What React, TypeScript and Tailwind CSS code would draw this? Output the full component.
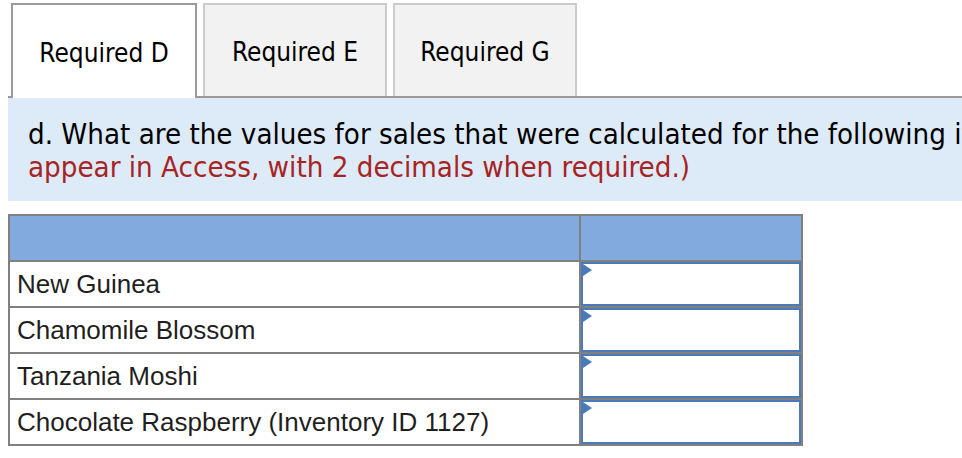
const tabs = [
  { label: 'Required D', width: 'w-[186px]', active: true },
  { label: 'Required E', width: 'w-[184px]', active: false },
  { label: 'Required G', width: 'w-[184px]', active: false },
];

const items = [
  'New Guinea',
  'Chamomile Blossom',
  'Tanzania Moshi',
  'Chocolate Raspberry (Inventory ID 1127)',
];

const tahoma = { fontFamily: '"DejaVu Sans Condensed", "DejaVu Sans", sans-serif', fontStretch: 'condensed' };

function AnswerInput() {
  return (
    <div className="relative h-full w-full border-2 border-[#4a7aba] bg-white">
      {/* little marker in the corner of each answer box */}
      <span className="absolute left-0 top-0 h-0 w-0 border-y-[6px] border-l-[9px] border-y-transparent border-l-[#4a7aba]" />
    </div>
  );
}

export default function App() {
  return (
    <div className="h-screen w-screen overflow-hidden bg-white">
      <div className="w-[1200px] pl-2 pt-[3px]">
        <div className="flex items-end gap-[6px] border-b-2 border-[#9a9a9a] pl-[3px]" style={tahoma}>
          {tabs.map((t) =>
            t.active ? (
              <div
                key={t.label}
                className={`${t.width} -mb-[2px] flex h-[95px] items-center justify-center border-2 border-b-0 border-[#9a9a9a] bg-white pt-[3px] text-[26px] text-black`}
              >
                {t.label}
              </div>
            ) : (
              <div
                key={t.label}
                className={`${t.width} flex h-[93px] items-center justify-center border-2 border-b-0 border-[#cbcbcb] bg-[#f2f2f2] pt-[3px] text-[26px] text-black`}
              >
                {t.label}
              </div>
            )
          )}
        </div>

        <div
          className="whitespace-nowrap bg-[#ddebf8] pb-[17px] pl-5 pt-[20px] text-[29.2px] leading-[33px]"
          style={tahoma}
        >
          <div className="text-black">
            d. What are the values for sales that were calculated for the following items? (Round your answers as they
          </div>
          <div className="text-[#a72424]">appear in Access, with 2 decimals when required.)</div>
        </div>

        <div
          className="mt-[13px] grid w-[795px] grid-cols-[569px_220px] gap-[2px] bg-[#808080] p-[2px] text-[26px] text-[#1f1f1f]"
          style={{ fontFamily: '"Liberation Sans", Arial, sans-serif' }}
        >
          <div className="h-[44px] bg-[#82aade]" />
          <div className="h-[44px] bg-[#82aade]" />
          {items.map((name) => (
            <div key={name} className="contents">
              <div className="flex h-[44px] items-center bg-white pl-[7px] pt-[1px]">{name}</div>
              <div className="h-[44px] bg-white">
                <AnswerInput />
              </div>
            </div>
          ))}
        </div>
      </div>
    </div>
  );
}
